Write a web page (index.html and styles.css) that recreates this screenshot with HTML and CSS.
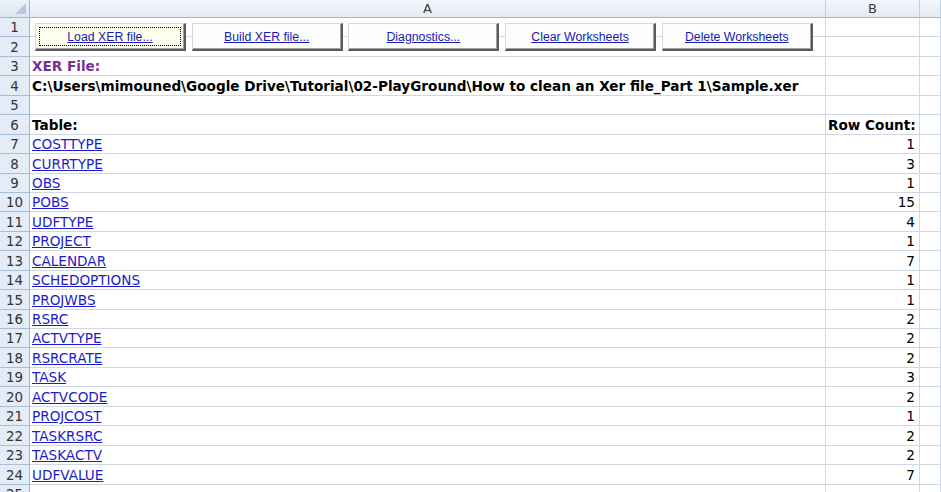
FILE: index.html
```html
<!DOCTYPE html>
<html>
<head>
<meta charset="utf-8">
<link rel="stylesheet" href="styles.css">
</head>
<body>
<div class="sheet">
  <div class="corner"><span class="tri"></span></div>
  <div class="ch">A</div>
  <div class="ch">B</div>
  <div class="ch ch-last"></div>

  <div class="rh">1</div><div class="c"></div><div class="c"></div><div class="c"></div>
  <div class="rh">2</div><div class="c"></div><div class="c"></div><div class="c"></div>
  <div class="rh">3</div><div class="c xer">XER File:</div><div class="c"></div><div class="c"></div>
  <div class="rh">4</div><div class="c b">C:\Users\mimouned\Google Drive\Tutorial\02-PlayGround\How to clean an Xer file_Part 1\Sample.xer</div><div class="c"></div><div class="c"></div>
  <div class="rh">5</div><div class="c"></div><div class="c"></div><div class="c"></div>
  <div class="rh">6</div><div class="c b">Table:</div><div class="c b">Row Count:</div><div class="c"></div>
  <div class="rh">7</div><div class="c"><a class="lnk">COSTTYPE</a></div><div class="c n">1</div><div class="c"></div>
  <div class="rh">8</div><div class="c"><a class="lnk">CURRTYPE</a></div><div class="c n">3</div><div class="c"></div>
  <div class="rh">9</div><div class="c"><a class="lnk">OBS</a></div><div class="c n">1</div><div class="c"></div>
  <div class="rh">10</div><div class="c"><a class="lnk">POBS</a></div><div class="c n">15</div><div class="c"></div>
  <div class="rh">11</div><div class="c"><a class="lnk">UDFTYPE</a></div><div class="c n">4</div><div class="c"></div>
  <div class="rh">12</div><div class="c"><a class="lnk">PROJECT</a></div><div class="c n">1</div><div class="c"></div>
  <div class="rh">13</div><div class="c"><a class="lnk">CALENDAR</a></div><div class="c n">7</div><div class="c"></div>
  <div class="rh">14</div><div class="c"><a class="lnk">SCHEDOPTIONS</a></div><div class="c n">1</div><div class="c"></div>
  <div class="rh">15</div><div class="c"><a class="lnk">PROJWBS</a></div><div class="c n">1</div><div class="c"></div>
  <div class="rh">16</div><div class="c"><a class="lnk">RSRC</a></div><div class="c n">2</div><div class="c"></div>
  <div class="rh">17</div><div class="c"><a class="lnk">ACTVTYPE</a></div><div class="c n">2</div><div class="c"></div>
  <div class="rh">18</div><div class="c"><a class="lnk">RSRCRATE</a></div><div class="c n">2</div><div class="c"></div>
  <div class="rh">19</div><div class="c"><a class="lnk">TASK</a></div><div class="c n">3</div><div class="c"></div>
  <div class="rh">20</div><div class="c"><a class="lnk">ACTVCODE</a></div><div class="c n">2</div><div class="c"></div>
  <div class="rh">21</div><div class="c"><a class="lnk">PROJCOST</a></div><div class="c n">1</div><div class="c"></div>
  <div class="rh">22</div><div class="c"><a class="lnk">TASKRSRC</a></div><div class="c n">2</div><div class="c"></div>
  <div class="rh">23</div><div class="c"><a class="lnk">TASKACTV</a></div><div class="c n">2</div><div class="c"></div>
  <div class="rh">24</div><div class="c"><a class="lnk">UDFVALUE</a></div><div class="c n">7</div><div class="c"></div>
  <div class="rh">25</div><div class="c"></div><div class="c"></div><div class="c"></div>

  <div class="buttons">
    <div class="btn focus"><span class="focusbox"><span class="bl">Load XER file...</span></span></div>
    <div class="btn"><span class="bl">Build XER file...</span></div>
    <div class="btn"><span class="bl">Diagnostics...</span></div>
    <div class="btn"><span class="bl">Clear Worksheets</span></div>
    <div class="btn"><span class="bl">Delete Worksheets</span></div>
  </div>
</div>
</body>
</html>
```
FILE: styles.css
```css
html, body {
  margin: 0;
  padding: 0;
  background: #ffffff;
  overflow: hidden;
}
.sheet {
  position: relative;
  display: grid;
  grid-template-columns: 30px 796px 94px 1fr;
  grid-template-rows: 18px repeat(25, 19.45px);
  width: 941px;
  height: 492px;
  overflow: hidden;
  font-family: "DejaVu Sans", Verdana, sans-serif;
  font-size: 13.6px;
  color: #000;
}
.corner {
  position: relative;
  background: linear-gradient(#eef3f9, #dce6f2);
  border-right: 1px solid #9eb6ce;
  border-bottom: 1px solid #9eb6ce;
  box-sizing: border-box;
}
.tri {
  position: absolute;
  right: 3px;
  bottom: 3px;
  width: 0;
  height: 0;
  border-left: 11px solid transparent;
  border-bottom: 11px solid #b8c9dd;
}
.ch {
  background: linear-gradient(#f4f7fb, #e4ebf5);
  border-right: 1px solid #c0d0e2;
  border-bottom: 1px solid #9eb6ce;
  box-sizing: border-box;
  display: flex;
  align-items: center;
  justify-content: center;
  color: #3a3a3a;
  font-size: 13px;
  line-height: 16px;
}
.rh {
  background: #e4ecf7;
  border-right: 1px solid #9eb6ce;
  border-bottom: 1px solid #a8bdd6;
  box-sizing: border-box;
  display: flex;
  align-items: flex-end;
  justify-content: center;
  color: #333;
  font-size: 13.4px;
  line-height: 17px;
  padding-bottom: 0;
}
.c {
  border-right: 1px solid #d0d7e5;
  border-bottom: 1px solid #d0d7e5;
  box-sizing: border-box;
  display: flex;
  align-items: flex-end;
  padding: 0 2px 0 2px;
  line-height: 17px;
  white-space: nowrap;
  overflow: visible;
}
.b { font-weight: bold; }
.xer { font-weight: bold; color: #7a2e96; }
.n { justify-content: flex-end; padding-right: 4px; }
.lnk {
  color: #1c1cc8;
  text-decoration: underline;
}
.buttons {
  position: absolute;
  left: 35px;
  top: 23px;
  display: flex;
  gap: 5.7px;
}
.btn {
  width: 151px;
  height: 28px;
  box-sizing: border-box;
  background: #fdfdfd;
  border-top: 1px solid #d8d8d8;
  border-left: 1px solid #d8d8d8;
  border-right: 2px solid #5a5a5a;
  border-bottom: 2px solid #5a5a5a;
  box-shadow: inset -1px -1px 0 #a0a0a0;
  display: flex;
  align-items: center;
  justify-content: center;
  font-family: "Liberation Sans", Arial, sans-serif;
  font-size: 12.3px;
}
.btn.focus {
  background: #fffff0;
  padding: 3px;
}
.focusbox {
  flex: 1;
  align-self: stretch;
  border: 1px dotted #000;
  display: flex;
  align-items: center;
  justify-content: center;
}
.bl {
  color: #1a1ab0;
  text-decoration: underline;
}
```
